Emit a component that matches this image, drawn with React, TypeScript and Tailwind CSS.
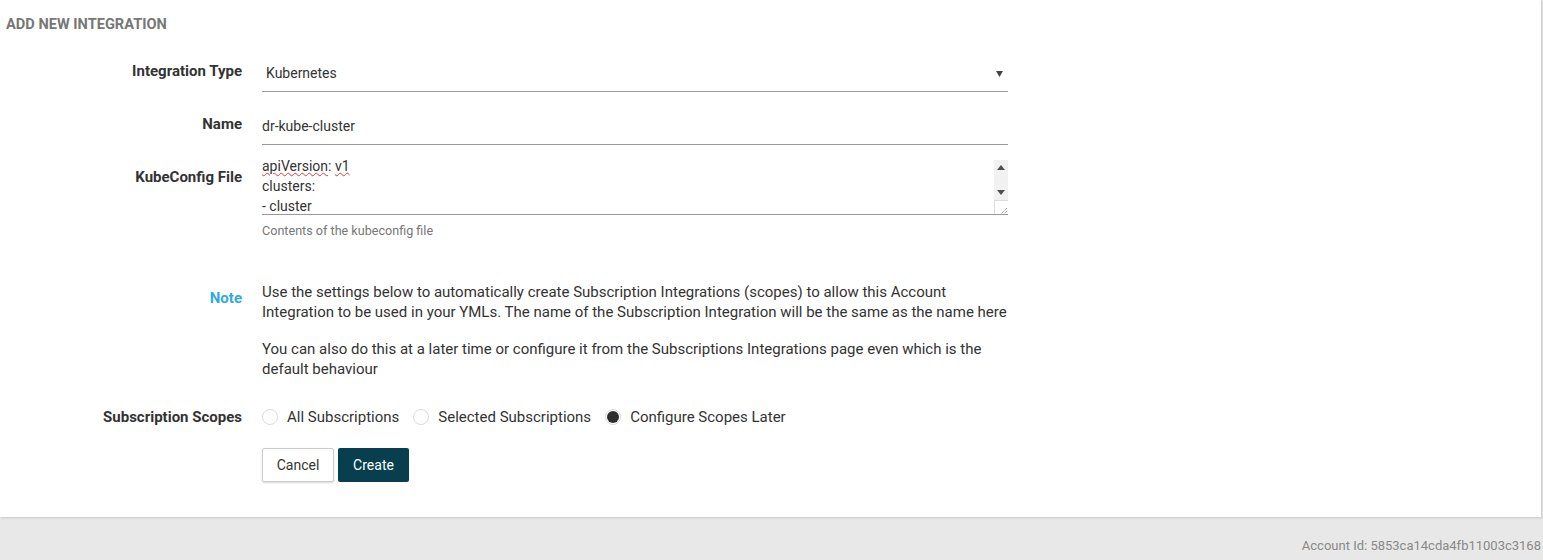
import { useState } from "react";

function Radio({ label, checked, onClick }: { label: string; checked: boolean; onClick: () => void }) {
    return (
        <label className="flex items-center cursor-pointer" onClick={onClick}>
            <span className="w-[16px] h-[16px] rounded-full border border-[#dcdcdc] flex items-center justify-center bg-white">
                {checked && <span className="w-[12px] h-[12px] rounded-full bg-[#2e2e2e]" />}
            </span>
            <span className="ml-[9px] text-[15px] text-[#333]">{label}</span>
        </label>
    );
}

export default function App() {
    const [scope, setScope] = useState("later");

    return (
        <div className="w-[1543px] h-[560px] bg-[#e8e8e8] font-['Roboto',sans-serif] text-[#333] overflow-hidden">
            <div className="w-[1541px] h-[517px] bg-white shadow-[1px_1px_2px_rgba(0,0,0,0.15)]">
                <h1 className="pt-[16px] pl-[6px] text-[14.6px] leading-[16px] font-bold text-[#777] uppercase">Add new integration</h1>

                <div className="flex mt-[24px]">
                    <div className="w-[242px] text-right font-bold text-[15px] leading-[20px] pt-[5px]">Integration Type</div>
                    <div className="ml-[20px] w-[746px] h-[36px] border-b border-[#999] flex items-center justify-between pl-[4px] pr-[5px] text-[14px]">
                        <span>Kubernetes</span>
                        <svg width="7" height="6" viewBox="0 0 7 6"><path d="M0 0h7L3.5 6z" fill="#444" /></svg>
                    </div>
                </div>

                <div className="flex mt-[17px]">
                    <div className="w-[242px] text-right font-bold text-[15px] leading-[20px] pt-[5px]">Name</div>
                    <div className="ml-[20px] w-[746px] h-[36px] border-b border-[#999] flex items-center text-[14px]">dr-kube-cluster</div>
                </div>

                <div className="flex mt-[11px]">
                    <div className="w-[242px] text-right font-bold text-[15px] leading-[20px] pt-[11px]">KubeConfig File</div>
                    <div className="ml-[20px] w-[746px]">
                        <div className="relative h-[59px] border-b border-[#999] text-[14px] leading-[20px] overflow-hidden">
                            <div>
                                <span className="underline decoration-wavy decoration-[#e53935] decoration-1 underline-offset-[1px]">apiVersion</span>: <span className="underline decoration-wavy decoration-[#e53935] decoration-1 underline-offset-[1px]">v1</span>
                            </div>
                            <div>clusters:</div>
                            <div>- cluster</div>
                            <div className="absolute right-0 top-[4px] w-[14px] h-[40px] bg-[#f1f1f1] flex flex-col items-center justify-between py-[5px]">
                                <svg width="8" height="5" viewBox="0 0 8 5"><path d="M0 5h8L4 0z" fill="#505050" /></svg>
                                <svg width="8" height="5" viewBox="0 0 8 5"><path d="M0 0h8L4 5z" fill="#505050" /></svg>
                            </div>
                            <div className="absolute right-0 top-[44px] w-[14px] h-[15px] bg-white border-l border-t border-[#ddd] flex items-end justify-end">
                                <svg width="9" height="9" viewBox="0 0 9 9"><path d="M8 2L2 8M8 5L5 8" stroke="#777" strokeWidth="1" strokeDasharray="1 1" /></svg>
                            </div>
                        </div>
                        <p className="text-[12.6px] text-[#777] mt-[7px]">Contents of the kubeconfig file</p>
                    </div>
                </div>

                <div className="flex mt-[41px]">
                    <div className="w-[242px] text-right font-bold text-[15px] leading-[20px] text-[#2eaae1] pt-[6px]">Note</div>
                    <div className="ml-[20px] w-[746px] text-[15px] leading-[20px]">
                        <p>Use the settings below to automatically create Subscription Integrations (scopes) to allow this Account Integration to be used in your YMLs. The name of the Subscription Integration will be the same as the name here</p>
                        <p className="mt-[17px]">You can also do this at a later time or configure it from the Subscriptions Integrations page even which is the default behaviour</p>
                    </div>
                </div>

                <div className="flex items-center mt-[27px]">
                    <div className="w-[242px] text-right font-bold text-[15px]">Subscription Scopes</div>
                    <div className="ml-[20px] flex items-center gap-[14px]">
                        <Radio label="All Subscriptions" checked={scope === "all"} onClick={() => setScope("all")} />
                        <Radio label="Selected Subscriptions" checked={scope === "selected"} onClick={() => setScope("selected")} />
                        <Radio label="Configure Scopes Later" checked={scope === "later"} onClick={() => setScope("later")} />
                    </div>
                </div>

                <div className="flex mt-[20px] ml-[262px] gap-[4px]">
                    <button className="w-[72px] h-[34px] border border-[#ccc] rounded-[2px] bg-white text-[14px] text-[#333] shadow-[0_1px_2px_rgba(0,0,0,0.15)]">Cancel</button>
                    <button className="w-[71px] h-[34px] rounded-[2px] bg-[#083f4f] text-[14px] text-white">Create</button>
                </div>
            </div>
            <div className="text-right pr-[2px] pt-[19px] text-[13px] text-[#888]">Account Id: 5853ca14cda4fb11003c3168</div>
        </div>
    );
}
